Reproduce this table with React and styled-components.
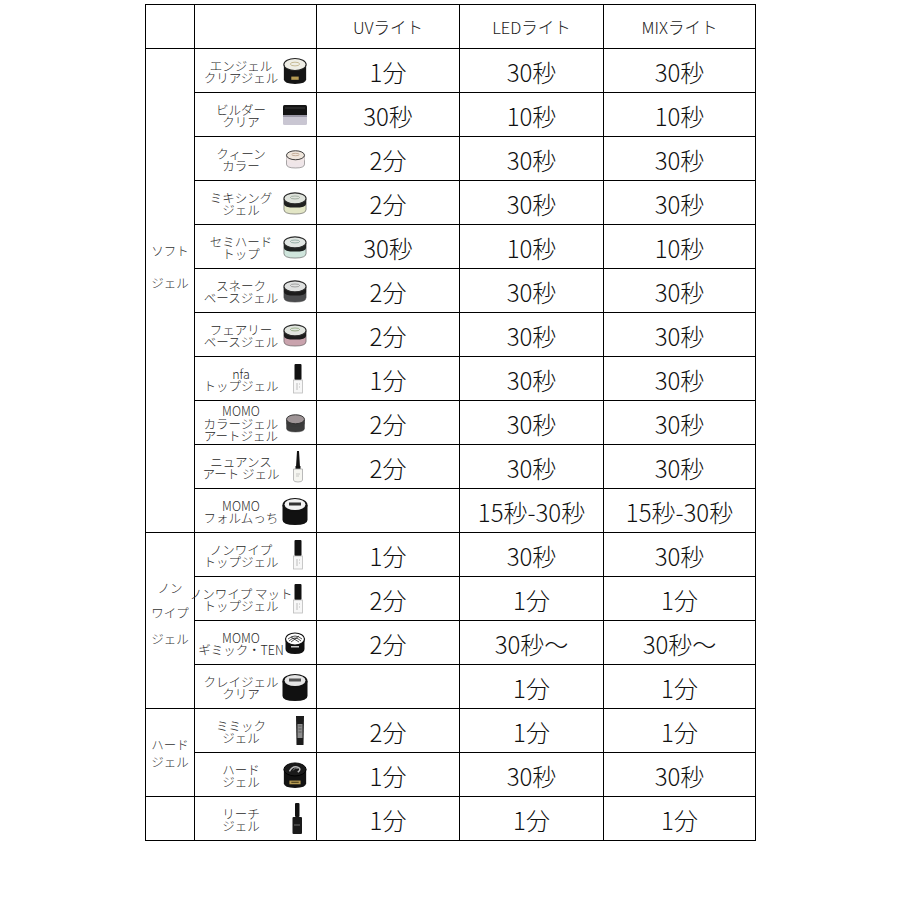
import React from 'react';
import styled, { createGlobalStyle } from 'styled-components';

const Global = createGlobalStyle`
  html, body { margin: 0; padding: 0; background: #fff; }
  body { font-family: "Noto Sans CJK JP", "Noto Sans", sans-serif; }
`;

const Grid = styled.div`
  display: grid;
  grid-template-columns: 48px 121px 142px 143px 151px;
  grid-auto-rows: 43px;
  gap: 1px;
  padding: 1px;
  background: #000;
  width: max-content;
  margin: 4px 0 0 145px;
`;

const Cell = styled.div`
  background: #fff;
  display: flex;
  align-items: center;
  justify-content: center;
  overflow: visible;
  min-width: 0;
`;

const HeadCell = styled(Cell)`
  font-size: 16.5px;
  font-weight: 300;
  color: #222;
  padding-top: 1px;
`;

const CategoryCell = styled(Cell)`
  grid-row: span ${(p) => p.$span};
  flex-direction: column;
  font-size: 12.5px;
  font-weight: 300;
  color: #333;
  line-height: ${(p) => p.$lh}px;
  padding-bottom: ${(p) => p.$shift}px;
  box-sizing: border-box;
`;

const ProductCell = styled(Cell)`
  justify-content: flex-start;
  padding-left: 6px;
  padding-right: 7px;
  box-sizing: border-box;
`;

const Names = styled.div`
  flex: 1;
  display: flex;
  flex-direction: column;
  align-items: center;
  font-size: 12.5px;
  font-weight: 300;
  line-height: 12.5px;
  color: #2a2a2a;
  white-space: nowrap;
  padding-top: 3px;
  min-width: 0;
`;

const Thumb = styled.div`
  width: 28px;
  height: 32px;
  flex: none;
  box-sizing: border-box;
  display: flex;
  align-items: center;
  justify-content: ${(p) => p.$justify || 'center'};
  padding-right: ${(p) => p.$pr || 0}px;
  position: relative;
  z-index: 1;
`;

const ValueCell = styled(Cell)`
  font-size: 24px;
  font-weight: 300;
  color: #111;
  padding-top: 2px;
  box-sizing: border-box;
`;

function Jar({ lid = '#e4e6e2', band = '#1c1c1c', body = '#222', w = 26, h = 24, label, lidMark }) {
  return (
    <svg width={w} height={h} viewBox="0 0 28 26">
      <path d="M2 9 V20 Q2 25 14 25 Q26 25 26 20 V9 Z" fill={body} stroke="#444" strokeWidth="0.6" />
      <path d="M2 9 V14 Q2 18 14 18 Q26 18 26 14 V9 Z" fill={band} />
      <ellipse cx="14" cy="8" rx="12" ry="6" fill={lid} stroke="#2a2a2a" strokeWidth="1.2" />
      {lidMark && <ellipse cx="14" cy="7" rx="5" ry="1.6" fill="none" stroke={lidMark} strokeWidth="0.8" />}
      {label && <rect x="10" y="19" width="8" height="3" fill={label} />}
    </svg>
  );
}

function Builder() {
  return (
    <svg width="26" height="24" viewBox="0 0 26 24">
      <rect x="1" y="2" width="24" height="11" rx="1.5" fill="#141414" />
      <rect x="1" y="12" width="24" height="10" rx="1.5" fill="#c9c6d2" />
      <rect x="1" y="12" width="24" height="2" fill="#9a97a5" />
      <path d="M3 5 H23" stroke="#555" strokeWidth="0.6" />
    </svg>
  );
}

function Bottle() {
  return (
    <svg width="12" height="32" viewBox="0 0 12 32">
      <rect x="2.5" y="1" width="7" height="16" rx="1" fill="#111" />
      <rect x="1.5" y="17" width="9" height="13" fill="#f7f7f7" stroke="#bbb" strokeWidth="0.8" />
      <path d="M5 20 V27 M7 21 H8 M7 24 H8" stroke="#999" strokeWidth="0.6" />
    </svg>
  );
}

function Nuance() {
  return (
    <svg width="12" height="34" viewBox="0 0 12 34">
      <path d="M5 1 H7 L8 17 H4 Z" fill="#111" />
      <rect x="3.5" y="16" width="5" height="3" fill="#111" />
      <path d="M1.5 19 H10.5 V30 Q10.5 32 6 32 Q1.5 32 1.5 30 Z" fill="#f5f5f0" stroke="#aaa" strokeWidth="0.8" />
      <path d="M4 24 H8 M4 26 H7" stroke="#999" strokeWidth="0.5" />
    </svg>
  );
}

function Tube() {
  return (
    <svg width="12" height="32" viewBox="0 0 12 32">
      <path d="M2 1 H10 L9.5 30 H2.5 Z" fill="#1b1b1b" />
      <rect x="3.5" y="9" width="5" height="14" fill="#8d8d8d" />
      <path d="M4.5 11 H7.5 M4.5 14 H7.5 M4.5 17 H7.5" stroke="#333" strokeWidth="0.6" />
    </svg>
  );
}

function Reach() {
  return (
    <svg width="12" height="34" viewBox="0 0 12 34">
      <rect x="4" y="1" width="4.5" height="14" rx="1" fill="#111" />
      <rect x="1.5" y="15" width="9.5" height="17" rx="1" fill="#1a1a1a" />
      <rect x="3" y="22" width="6" height="2" fill="#444" />
    </svg>
  );
}

function Angel() {
  return (
    <svg width="26" height="30" viewBox="0 0 28 30">
      <path d="M2 8 V24 Q2 29 14 29 Q26 29 26 24 V8 Z" fill="#141414" />
      <ellipse cx="14" cy="8" rx="12" ry="6.5" fill="#efeee6" stroke="#222" strokeWidth="1.2" />
      <ellipse cx="14" cy="7.5" rx="5" ry="2" fill="none" stroke="#b9a97a" strokeWidth="0.8" />
      <rect x="10" y="21" width="8" height="3.5" fill="#b59a52" />
    </svg>
  );
}

function BigBlackJar({ lid = '#e8e8e8', w = 28, h = 30, mark = '#333', label }) {
  return (
    <svg width={w} height={h} viewBox="0 0 28 30">
      <path d="M1.5 9 V24 Q1.5 29 14 29 Q26.5 29 26.5 24 V9 Z" fill="#111" />
      <ellipse cx="14" cy="9" rx="12.5" ry="7" fill="#111" />
      <ellipse cx="14" cy="8.5" rx="10.5" ry="5.5" fill={lid} />
      <rect x="8" y="6.5" width="12" height="3" fill={mark} />
      {label && <rect x="10" y="22" width="8" height="4" fill={label} />}
    </svg>
  );
}

function Gimmick() {
  return (
    <svg width="22" height="24" viewBox="0 0 22 24">
      <path d="M1.5 8 V18 Q1.5 23 11 23 Q20.5 23 20.5 18 V8 Z" fill="#111" />
      <ellipse cx="11" cy="8" rx="9.5" ry="6" fill="#fff" stroke="#111" strokeWidth="1.2" />
      <path d="M4 8 Q11 2 18 8 M5 10 Q11 4 17 10 M7 6 L15 11 M15 5 L7 11" stroke="#222" strokeWidth="0.8" fill="none" />
      <rect x="7" y="15" width="8" height="1.5" fill="#ccc" />
    </svg>
  );
}

function Hard() {
  return (
    <svg width="26" height="30" viewBox="0 0 28 30">
      <path d="M2 9 V24 Q2 29 14 29 Q26 29 26 24 V9 Z" fill="#121212" />
      <ellipse cx="14" cy="9" rx="12" ry="7" fill="#1a1a1a" stroke="#000" strokeWidth="1" />
      <path d="M8 11 Q12 4 18 7 Q21 9 17 12" stroke="#bbb" strokeWidth="1.6" fill="none" />
      <path d="M12 10 Q14 6 17 8" stroke="#888" strokeWidth="1" fill="none" />
      <rect x="8" y="21" width="12" height="4" fill="#b59a52" />
      <rect x="10" y="22.2" width="8" height="1.4" fill="#5a4a20" />
    </svg>
  );
}

const thumbs = {
  angel: <Angel />,
  builder: <Builder />,
  queen: <Jar w={21} h={22} lid="#efe6dc" band="#f1e7e7" body="#efe6e9" lidMark="#a8896e" />,
  mixing: <Jar lid="#dfe3dc" band="#202020" body="#e3e6c6" lidMark="#8a9a8a" />,
  semihard: <Jar lid="#e1e6e3" band="#1f2321" body="#cfe5dc" lidMark="#7a9a90" />,
  snake: <Jar lid="#dfe1e0" band="#1c1c1c" body="#4a4b4d" lidMark="#888" />,
  fairy: <Jar lid="#e1e5df" band="#1c1c1c" body="#c9a3ad" lidMark="#7f9a6a" />,
  bottle: <Bottle />,
  momoColor: <Jar w={21} h={24} lid="#9e9496" band="#3a3a3a" body="#3c3c3c" />,
  nuance: <Nuance />,
  forum: <BigBlackJar lid="#f2f2f2" />,
  gimmick: <Gimmick />,
  clay: <BigBlackJar lid="#e6e6e6" mark="#555" />,
  tube: <Tube />,
  hard: <Hard />,
  reach: <Reach />,
};

const thumbPlace = {
  bottle: ['flex-end', 5],
  nuance: ['flex-end', 5],
  tube: ['flex-end', 3],
  reach: ['flex-end', 6],
};

const groups = [
  {
    name: ['ソフト', 'ジェル'], lh: 32, shift: 48,
    rows: [
      { name: ['エンジェル', 'クリアジェル'], thumb: 'angel', uv: '1分', led: '30秒', mix: '30秒' },
      { name: ['ビルダー', 'クリア'], thumb: 'builder', uv: '30秒', led: '10秒', mix: '10秒' },
      { name: ['クィーン', 'カラー'], thumb: 'queen', uv: '2分', led: '30秒', mix: '30秒' },
      { name: ['ミキシング', 'ジェル'], thumb: 'mixing', uv: '2分', led: '30秒', mix: '30秒' },
      { name: ['セミハード', 'トップ'], thumb: 'semihard', uv: '30秒', led: '10秒', mix: '10秒' },
      { name: ['スネーク', 'ベースジェル'], thumb: 'snake', uv: '2分', led: '30秒', mix: '30秒' },
      { name: ['フェアリー', 'ベースジェル'], thumb: 'fairy', uv: '2分', led: '30秒', mix: '30秒' },
      { name: ['nfa', 'トップジェル'], thumb: 'bottle', uv: '1分', led: '30秒', mix: '30秒' },
      { name: ['MOMO', 'カラージェル', 'アートジェル'], thumb: 'momoColor', uv: '2分', led: '30秒', mix: '30秒' },
      { name: ['ニュアンス', 'アート ジェル'], thumb: 'nuance', uv: '2分', led: '30秒', mix: '30秒' },
      { name: ['MOMO', 'フォルムっち'], thumb: 'forum', uv: '', led: '15秒-30秒', mix: '15秒-30秒' },
    ],
  },
  {
    name: ['ノン', 'ワイプ', 'ジェル'], lh: 25.5, shift: 15,
    rows: [
      { name: ['ノンワイプ', 'トップジェル'], thumb: 'bottle', uv: '1分', led: '30秒', mix: '30秒' },
      { name: ['ノンワイプ マット', 'トップジェル'], thumb: 'bottle', uv: '2分', led: '1分', mix: '1分' },
      { name: ['MOMO', 'ギミック・TEN'], thumb: 'gimmick', uv: '2分', led: '30秒～', mix: '30秒～' },
      { name: ['クレイジェル', 'クリア'], thumb: 'clay', uv: '', led: '1分', mix: '1分' },
    ],
  },
  {
    name: ['ハード', 'ジェル'], lh: 17, shift: 0,
    rows: [
      { name: ['ミミック', 'ジェル'], thumb: 'tube', uv: '2分', led: '1分', mix: '1分' },
      { name: ['ハード', 'ジェル'], thumb: 'hard', uv: '1分', led: '30秒', mix: '30秒' },
    ],
  },
  {
    name: [], lh: 17, shift: 0,
    rows: [
      { name: ['リーチ', 'ジェル'], thumb: 'reach', uv: '1分', led: '1分', mix: '1分' },
    ],
  },
];

export default function App() {
  return (
    <>
      <Global />
      <Grid>
        <HeadCell />
        <HeadCell />
        <HeadCell>UVライト</HeadCell>
        <HeadCell>LEDライト</HeadCell>
        <HeadCell>MIXライト</HeadCell>
        {groups.map((g, gi) => (
          <React.Fragment key={gi}>
            <CategoryCell $span={g.rows.length} $lh={g.lh} $shift={g.shift}>
              {g.name.map((n) => (
                <span key={n}>{n}</span>
              ))}
            </CategoryCell>
            {g.rows.map((r, ri) => {
              const place = thumbPlace[r.thumb] || ['center', 0];
              return (
                <React.Fragment key={ri}>
                  <ProductCell>
                    <Names>
                      {r.name.map((n, i) => (
                        <span key={i}>{n}</span>
                      ))}
                    </Names>
                    <Thumb $justify={place[0]} $pr={place[1]}>
                      {thumbs[r.thumb]}
                    </Thumb>
                  </ProductCell>
                  <ValueCell>{r.uv}</ValueCell>
                  <ValueCell>{r.led}</ValueCell>
                  <ValueCell>{r.mix}</ValueCell>
                </React.Fragment>
              );
            })}
          </React.Fragment>
        ))}
      </Grid>
    </>
  );
}
